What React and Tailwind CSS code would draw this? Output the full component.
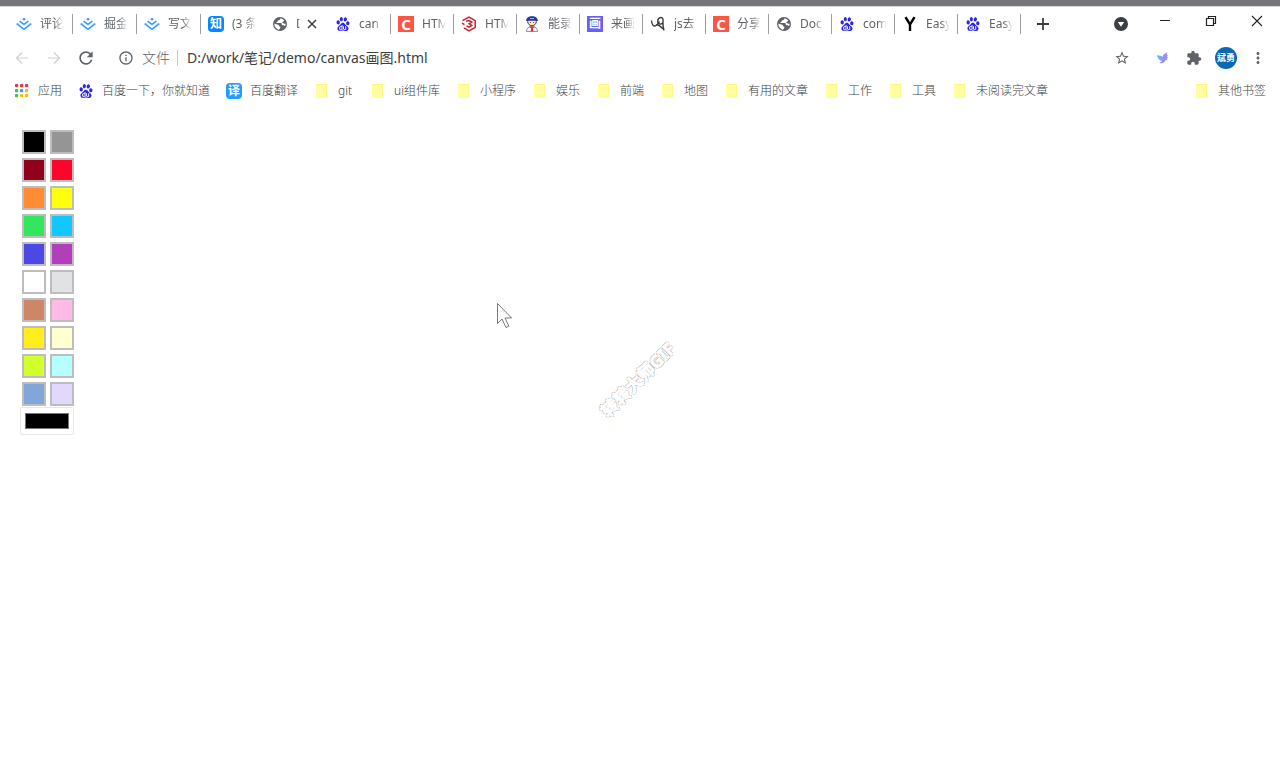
import React, { useState } from 'react';
import { SiBaidu, SiJuejin } from 'react-icons/si';
import { MdExtension, MdInfoOutline, MdMoreVert, MdRefresh, MdStarBorder } from 'react-icons/md';

const swatches = [
  '#000000', '#959595',
  '#8f001b', '#fc062c',
  '#ff8b33', '#ffff0d',
  '#34e65c', '#12c6ff',
  '#4b48e3', '#b23fba',
  '#ffffff', '#e1e2e4',
  '#cc8866', '#ffbbe6',
  '#ffee1c', '#ffffcf',
  '#d2ff2b', '#b5ffff',
  '#82a6da', '#e2d7fc',
];

const tabs = [
  { icon: 'juejin', title: '评论' },
  { icon: 'juejin', title: '掘金' },
  { icon: 'juejin', title: '写文' },
  { icon: 'zhihu', title: '(3 条' },
  { icon: 'globe', title: 'D', active: true },
  { icon: 'baidu', title: 'can' },
  { icon: 'csdn', title: 'HTM' },
  { icon: 'hex', title: 'HTM' },
  { icon: 'person', title: '能录' },
  { icon: 'draw', title: '来画' },
  { icon: 'script', title: 'js去' },
  { icon: 'csdn', title: '分享' },
  { icon: 'globe', title: 'Doc' },
  { icon: 'baidu', title: 'com' },
  { icon: 'yandex', title: 'Easy' },
  { icon: 'baidu', title: 'Easy' },
];

const bookmarks = [
  { icon: 'apps', title: '应用' },
  { icon: 'baidu', title: '百度一下，你就知道' },
  { icon: 'translate', title: '百度翻译' },
  { icon: 'folder', title: 'git' },
  { icon: 'folder', title: 'ui组件库' },
  { icon: 'folder', title: '小程序' },
  { icon: 'folder', title: '娱乐' },
  { icon: 'folder', title: '前端' },
  { icon: 'folder', title: '地图' },
  { icon: 'folder', title: '有用的文章' },
  { icon: 'folder', title: '工作' },
  { icon: 'folder', title: '工具' },
  { icon: 'folder', title: '未阅读完文章' },
];

function AppsIcon() {
  const colors = ['#e8353f', '#e8353f', '#e8353f', '#3fc45c', '#3b9cf5', '#fbbc05', '#3fc45c', '#fbbc05', '#fbbc05'];
  return (
    <svg viewBox="0 0 16 16" className="size-4">
      {colors.map((c, i) => (
        <rect key={i} x={1 + (i % 3) * 5} y={1 + Math.floor(i / 3) * 5} width="3.200" height="3.200" rx="0.800" fill={c} />
      ))}
    </svg>
  );
}

function FolderIcon() {
  return (
    <svg viewBox="0 0 16 16" className="size-4">
      <path d="M3 1h9a1 1 0 0 1 1 1v8.500l1 1V14a1 1 0 0 1-1 1H3a1 1 0 0 1-1-1V2a1 1 0 0 1 1-1z" fill="#ffff9f" />
      <path d="M2.500 1.500h10v9.500M11.500 14.500v-2l2-1.500" fill="none" stroke="#fff27c" strokeWidth="0.800" />
    </svg>
  );
}

function GlobeIcon() {
  return (
    <svg viewBox="0 0 16 16" className="size-4">
      <circle cx="8" cy="8" r="7" fill="#5f6368" />
      <path d="M8.500 2.300c-.2 1.400-.8 1.700-2 2-.9.300-.5 1.300-1.400 1.500-.8.200-1 .8-.4 1.300h3.600c1.200 0 1.500.6 1.500 1.500 0 .7.600.8 1.300.6.900-.2 1.100.6 2 .8.400-.8.600-1.500.6-2.200-1.200.2-1.800-.4-2.700-.8-1-.4-.5-1.600.3-1.600.7 0 .9-.6.700-1.200A6 6 0 0 0 8.500 2.300z" fill="#fff" />
      <path d="M2.300 7.600c1.300.7 3 .8 4.200 1.300 1 .4.700 1.600 1.500 1.900.8.400.3 1.700-.9 2.900a5.800 5.800 0 0 1-4.800-6.100z" fill="#fff" />
    </svg>
  );
}

function HexIcon() {
  return (
    <svg viewBox="0 0 16 16" className="size-4" fill="none" stroke="#c8202f" strokeWidth="1.500">
      <path d="M1.500 4.600 8 1.200l6.200 3.500v6.600L8 14.800l-5-2.900" />
      <path d="M5 5.300 8 4.500l2.800 1.500-2.600 1.700 2.600 1.700L8 11.200l-2.500-1.400M1 7.200l2.500 1.500" />
    </svg>
  );
}

function PersonIcon() {
  return (
    <svg viewBox="0 0 16 16" className="size-4">
      <circle cx="8" cy="5.500" r="4.300" fill="#ffe9b0" stroke="#26336f" />
      <path d="M2 5C2.500 1.500 5 .3 8 .3S13.500 1.500 14 5l-3-.3H5z" fill="#28369a" />
      <path d="M6 2.500h4" stroke="#8fb0f0" />
      <path d="M6.200 6.500h.8M9 6.500h.8" stroke="#333" />
      <path d="M2.500 15.500c0-3.500 2-5 5.500-5s5.500 1.500 5.500 5z" fill="#f4f4f8" stroke="#7b7b88" strokeWidth="0.800" />
      <path d="M5.500 10.800 8 11.800l2.500-1M8 11.500l.8 3.500H7.200z" fill="#e0252f" stroke="#e0252f" />
    </svg>
  );
}

function ScriptIcon() {
  return (
    <svg viewBox="0 0 16 16" className="size-4" fill="none" stroke="#3b3b3b" strokeWidth="1.400">
      <path d="M1.500 4.500c.3 3 1.500 5.500 3 5.500 2 0 3.500-2.500 5-4.500" />
      <path d="M12.500 7c-1.500 1.700-4.500 1.500-4.800-1.200C7.500 3.500 9 1.500 11 1.500s2.200 2 2 4c-.2 3.500-.2 6 1 9" />
      <path d="M6.500 8.800c2 0 4 1.500 6.500 4.200" />
    </svg>
  );
}

function Icon({ name }) {
  switch (name) {
    case 'juejin':
      return <SiJuejin className="size-4 text-[#3ba0fb]" />;
    case 'baidu':
      return <SiBaidu className="size-4 p-px text-[#2c26e0]" />;
    case 'globe':
      return <GlobeIcon />;
    case 'hex':
      return <HexIcon />;
    case 'person':
      return <PersonIcon />;
    case 'script':
      return <ScriptIcon />;
    case 'apps':
      return <AppsIcon />;
    case 'folder':
      return <FolderIcon />;
    case 'zhihu':
      return <span className="flex size-4 items-center justify-center rounded-sm bg-[#0a84ff] text-[12px] leading-4 font-bold text-white">知</span>;
    case 'translate':
      return <span className="flex size-4 items-center justify-center rounded-sm bg-[#259bff] text-[12px] leading-4 font-bold text-white">译</span>;
    case 'draw':
      return <span className="flex size-4 items-center justify-center bg-[#6660f5] text-[12px] leading-4 font-bold text-white">画</span>;
    case 'csdn':
      return <span className="flex size-4 items-center justify-center bg-[#fc5543] text-[15px] leading-4 font-bold text-white">C</span>;
    case 'yandex':
      return (
        <svg viewBox="0 0 16 16" className="size-4" fill="none" stroke="#000" strokeWidth="2.400">
          <path d="M3.500 1.200 8 8.500l4.500-7.300M8 8v7" />
        </svg>
      );
    default:
      return null;
  }
}

function Tab({ tab, wide, divider }) {
  return (
    <div className={`flex h-5 shrink-0 items-center border-r pl-[7px] ${wide ? 'w-16' : 'w-[63px]'} ${divider ? 'border-[#9b9da3]' : 'border-transparent'}`}>
      <button type="button" aria-label={tab.title} className="flex items-center gap-2">
        <span className="size-4 shrink-0"><Icon name={tab.icon} /></span>
        <span className={`overflow-hidden text-left text-[12px] leading-5 whitespace-nowrap mask-r-from-60% ${tab.active ? 'w-1' : 'w-6'}`}>
          {tab.title}
        </span>
      </button>
      {tab.active && (
        <button type="button" aria-label="Close tab" className="ml-1 flex size-4 items-center justify-center">
          <svg viewBox="0 0 16 16" className="size-4" stroke="#3c4043" strokeWidth="1.500">
            <path d="m4 4 8 8M12 4l-8 8" />
          </svg>
        </button>
      )}
    </div>
  );
}

function TabStrip() {
  return (
    <div className="flex h-[34px] items-center pl-[9px] text-[#5f6368]">
      {tabs.map((tab, i) => (
        <Tab key={i} tab={tab} wide={i < 4} divider={i !== 3 && i !== 4} />
      ))}
      <button type="button" aria-label="New tab" className="ml-3.5">
        <svg viewBox="0 0 16 16" className="size-4" stroke="#3c4043" strokeWidth="1.800">
          <path d="M8 2v12M2 8h12" />
        </svg>
      </button>
      <button type="button" aria-label="Search tabs" className="ml-auto">
        <svg viewBox="0 0 16 16" className="size-4">
          <circle cx="8" cy="8" r="7" fill="#3c4043" />
          <path d="M4.800 6h6.400L8 10.800z" fill="#fff" />
        </svg>
      </button>
      <div className="ml-7 flex items-center gap-[30px] pr-[15px] pb-1.5">
        <button type="button" aria-label="Minimize">
          <svg viewBox="0 0 16 16" className="size-4" stroke="#222">
            <path d="M3 7.500h10" />
          </svg>
        </button>
        <button type="button" aria-label="Restore">
          <svg viewBox="0 0 16 16" className="size-4" fill="none" stroke="#222" strokeWidth="1.200">
            <path d="M3.500 5.500h7v7h-7zM5.500 5.500v-2h7v7h-2" />
          </svg>
        </button>
        <button type="button" aria-label="Close">
          <svg viewBox="0 0 16 16" className="size-4" stroke="#222" strokeWidth="1.100">
            <path d="m3 3 10 10M13 3 3 13" />
          </svg>
        </button>
      </div>
    </div>
  );
}

function AddressBar() {
  const [url, setUrl] = useState('D:/work/笔记/demo/canvas画图.html');

  return (
    <div className="flex h-[34px] items-center pr-[13px] pl-3.5 text-[#5f6368]">
      <button type="button" aria-label="Back" className="mr-4">
        <svg viewBox="0 0 16 16" className="size-4" fill="none" stroke="#cfd0d2" strokeWidth="1.200">
          <path d="M14 8H2.500M8 2.500 2.500 8 8 13.500" />
        </svg>
      </button>
      <button type="button" aria-label="Forward" className="mr-3.5">
        <svg viewBox="0 0 16 16" className="size-4" fill="none" stroke="#cfd0d2" strokeWidth="1.200">
          <path d="M2 8h11.500M8 2.500 13.500 8 8 13.500" />
        </svg>
      </button>
      <button type="button" aria-label="Reload">
        <MdRefresh className="size-5" />
      </button>
      <MdInfoOutline className="ml-[22px] size-4" />
      <label htmlFor="url" className="ml-2 border-r border-[#c8c9cc] pr-[7px] text-[14px] leading-4 font-light">文件</label>
      <input
        id="url"
        type="text"
        value={url}
        onChange={e => setUrl(e.target.value)}
        className="ml-[9px] min-w-0 flex-1 text-[14px] leading-5 text-[#3c4043] outline-none"
      />
      <button type="button" aria-label="Bookmark this page" className="mr-[25px]">
        <MdStarBorder className="size-4" />
      </button>
      <button type="button" aria-label="Bird extension" className="mr-[15px]">
        <svg viewBox="0 0 16 16" className="size-4">
          <path d="M2 5.500 6 6l1.500 1c.5-2.500 2.500-4 5-4.500L11.500 5l1.500-.3L12 7l1.300.3L11.500 9l1.300.8-2.500.7C9.500 13 7 13.500 4.500 13L7 11C5 10.500 3.500 9 3 7.500z" fill="#9790f8" />
          <path d="m2 5.500 4 .5 1.500 1L7 10C5 10 3.500 9 3 7.500z" fill="#6fb0fa" />
        </svg>
      </button>
      <button type="button" aria-label="Extensions" className="mr-[13px]">
        <MdExtension className="size-4" />
      </button>
      <button type="button" aria-label="Profile" className="mr-3 size-[22px] rounded-full bg-[#0c69b1] text-[9px] leading-5 font-bold text-white">
        斌勇
      </button>
      <button type="button" aria-label="Menu">
        <MdMoreVert className="size-[18px]" />
      </button>
    </div>
  );
}

function Bookmark({ item }) {
  return (
    <a href="#" className="flex min-w-10 shrink-0 items-center gap-2 text-[12px] leading-4 whitespace-nowrap">
      <Icon name={item.icon} />
      {item.title}
    </a>
  );
}

function BookmarksBar() {
  return (
    <nav className="flex h-8 items-center gap-4 px-3.5 font-light text-[#3c4043]">
      {bookmarks.map(item => <Bookmark key={item.title} item={item} />)}
      <div className="ml-auto">
        <Bookmark item={{ icon: 'folder', title: '其他书签' }} />
      </div>
    </nav>
  );
}

function Palette({ color, onPick }) {
  return (
    <div className="flex w-fit flex-col pt-[23px] pl-5">
      <div className="grid grid-cols-2 gap-1 pl-0.5">
        {swatches.map(c => (
          <button
            key={c}
            type="button"
            aria-label={c}
            onClick={() => onPick(c)}
            className="size-6 border-2 border-[#bdbdbf]"
            style={{ backgroundColor: c }}
          />
        ))}
      </div>
      <input
        type="color"
        aria-label="Custom color"
        value={color}
        onChange={e => onPick(e.target.value)}
        className="mt-px h-7 w-[54px] rounded-xs border border-[#e6e6e6] px-0.5 py-px"
      />
    </div>
  );
}

export default function App() {
  const [color, setColor] = useState('#000000');

  return (
    <div className="relative min-h-screen overflow-hidden bg-white font-['Noto_Sans','Noto_Sans_CJK_SC',sans-serif]">
      <header>
        <div className="h-[7px] border-b border-[#d6d5d9] bg-[#77757b]" />
        <TabStrip />
        <AddressBar />
        <BookmarksBar />
      </header>
      <main>
        <Palette color={color} onPick={setColor} />
      </main>

      {/* pointer */}
      <svg viewBox="0 0 16 26" className="absolute top-[303px] left-[497px] h-[26px] w-4" fill="#fff" stroke="#555" strokeWidth="0.800">
        <path d="M.5.5v20l4.500-4.500 4 8.500 2.800-1.300L8 15h6.500z" />
      </svg>

      <div className="absolute top-[368px] left-[583px] w-[110px] -rotate-45 text-center text-[17px] leading-6 font-bold whitespace-nowrap text-white [-webkit-text-stroke:1px_#fff] [text-shadow:1px_0_#a8a8a8,-1px_0_#a8a8a8,0_1px_#a8a8a8,0_-1px_#a8a8a8]">
        转转大师GIF
      </div>
    </div>
  );
}
